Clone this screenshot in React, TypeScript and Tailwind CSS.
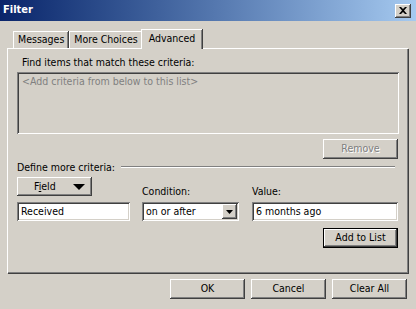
import React from "react";

const raised =
  "shadow-[inset_-1px_-1px_#404040,inset_1px_1px_#ffffff,inset_-2px_-2px_#808080,inset_2px_2px_#d4d0c8]";
const sunken =
  "shadow-[inset_1px_1px_#808080,inset_-1px_-1px_#ffffff,inset_2px_2px_#404040,inset_-2px_-2px_#d4d0c8]";

function Button({
  children,
  className = "",
  disabled = false,
  isDefault = false,
}: {
  children: React.ReactNode;
  className?: string;
  disabled?: boolean;
  isDefault?: boolean;
}) {
  if (isDefault) {
    return (
      <div className={`h-[20px] w-[75px] border border-black bg-[#d4d0c8] ${className}`}>
        <div className={`flex h-full w-full items-center justify-center ${raised} text-black`}>
          {children}
        </div>
      </div>
    );
  }
  return (
    <div
      className={`flex h-[20px] w-[75px] items-center justify-center bg-[#d4d0c8] ${raised} ${
        disabled ? "text-[#808080] [text-shadow:1px_1px_#ffffff]" : "text-black"
      } ${className}`}
    >
      {children}
    </div>
  );
}

function Tab({ label, active = false }: { label: string; active?: boolean }) {
  if (active) {
    return (
      <div className="relative z-10 -mb-[1px] -ml-[2px] flex h-[20px] items-center border-l border-t border-white bg-[#d4d0c8] px-[7px] pb-[2px] shadow-[inset_-1px_0_#808080,1px_0_#404040]">
        {label}
      </div>
    );
  }
  return (
    <div className="flex h-[17px] items-center border-l border-t border-white bg-[#d4d0c8] px-[4px] shadow-[inset_-1px_0_#808080,1px_0_#404040]">
      {label}
    </div>
  );
}

export default function App() {
  return (
    <div className="flex h-[309px] w-[416px] flex-col overflow-hidden bg-[#d4d0c8] font-['DejaVu_Sans_Condensed','Liberation_Sans',sans-serif] text-[10.5px] text-black">
      {/* Title bar */}
      <div className="flex h-[21px] shrink-0 items-center justify-between bg-gradient-to-r from-[#0a246a] to-[#a6caf0] pl-[3px] pr-[5px]">
        <span className="text-[11px] font-bold text-white">Filter</span>
        <div className={`flex h-[14px] w-[16px] items-center justify-center bg-[#d4d0c8] ${raised}`}>
          <svg width="8" height="7" viewBox="0 0 8 7">
            <path d="M0 0h2l2 2 2-2h2L5 3.5 8 7H6L4 5 2 7H0l3-3.5z" fill="#000" />
          </svg>
        </div>
      </div>

      {/* Tabs + panel */}
      <div className="flex flex-col px-[7px] pt-[8px]">
        <div className="flex items-end gap-[1px] pl-[6px]">
          <Tab label="Messages" />
          <Tab label="More Choices" />
          <Tab label="Advanced" active />
        </div>
        <div className="flex h-[225px] w-[401px] flex-col border-l border-t border-white px-[9px] pt-[6px] shadow-[inset_-1px_-1px_#808080,1px_1px_#404040]">
          <div className="h-[14px] pl-[5px] leading-[14px]">Find items that match these criteria:</div>
          <div className={`mt-[3px] h-[62px] w-[382px] px-[5px] pt-[2px] leading-[14px] text-[#808080] ${sunken}`}>
            &lt;Add criteria from below to this list&gt;
          </div>
          <div className="mt-[5px] flex justify-end pr-[1px]">
            <Button disabled>Remove</Button>
          </div>
          <div className="mt-[1px] flex h-[14px] items-center gap-[6px] leading-[14px]">
            <span>Define more criteria:</span>
            <div className="mr-[4px] h-[2px] flex-1 border-t border-b border-t-[#808080] border-b-white" />
          </div>
          <div className="mt-[3px] flex items-end">
            <div className="flex w-[125px] flex-col gap-[6px]">
              <div
                className={`flex h-[19px] w-[75px] items-center justify-between bg-[#d4d0c8] pl-[17px] pr-[7px] ${raised}`}
              >
                <span>
                  F<span className="underline">i</span>eld
                </span>
                <svg width="12" height="6" viewBox="0 0 12 6">
                  <path d="M0 0h12L6 6z" fill="#000" />
                </svg>
              </div>
              <div className={`flex h-[19px] w-[113px] items-center bg-white pl-[4px] ${sunken}`}>Received</div>
            </div>
            <div className="flex w-[110px] flex-col gap-[4px]">
              <span className="h-[14px] leading-[14px]">Condition:</span>
              <div className={`flex h-[19px] w-[97px] items-center justify-between bg-white py-[2px] pl-[4px] pr-[2px] ${sunken}`}>
                <span>on or after</span>
                <div className={`flex h-[15px] w-[15px] items-center justify-center bg-[#d4d0c8] ${raised}`}>
                  <svg width="7" height="4" viewBox="0 0 7 4">
                    <path d="M0 0h7L3.5 4z" fill="#000" />
                  </svg>
                </div>
              </div>
            </div>
            <div className="flex flex-col gap-[4px]">
              <span className="h-[14px] leading-[14px]">Value:</span>
              <div className={`flex h-[19px] w-[146px] items-center bg-white pl-[4px] ${sunken}`}>6 months ago</div>
            </div>
          </div>
          <div className="mt-[7px] flex justify-end pr-[1px]">
            <Button isDefault>Add to List</Button>
          </div>
        </div>
      </div>

      {/* Bottom buttons */}
      <div className="mt-[6px] flex justify-end gap-[6px] pr-[9px]">
        <Button>OK</Button>
        <Button>Cancel</Button>
        <Button>Clear All</Button>
      </div>
    </div>
  );
}
